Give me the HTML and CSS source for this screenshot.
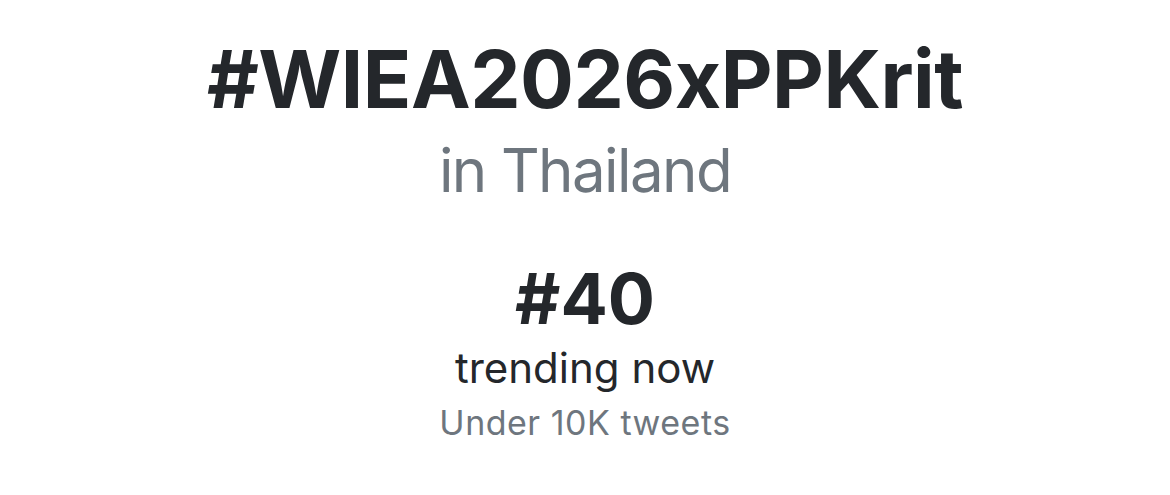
FILE: index.html
```html
<!DOCTYPE html>
<html>
<head>
<meta charset="utf-8">
<link rel="stylesheet" href="styles.css">
</head>
<body>
<main class="card">
  <h1 class="tag">#WIEA2026xPPKrit</h1>
  <div class="place">in Thailand</div>
  <div class="rank">#40</div>
  <div class="status">trending now</div>
  <div class="count">Under 10K tweets</div>
</main>
</body>
</html>
```
FILE: styles.css
```css
html, body {
  margin: 0;
  padding: 0;
  background: #ffffff;
}
body {
  width: 1170px;
  height: 495px;
  overflow: hidden;
  font-family: Inter, "Noto Sans", sans-serif;
}
.card {
  display: flex;
  flex-direction: column;
  align-items: center;
  padding-top: 31px;
}
.tag {
  margin: 0;
  font-size: 80px;
  font-weight: 700;
  line-height: 96px;
  color: #24272b;
  letter-spacing: -0.5px;
}
.place {
  margin-top: 7px;
  font-size: 60px;
  line-height: 72px;
  color: #6e767e;
  letter-spacing: -1.6px;
}
.rank {
  margin-top: 53px;
  font-size: 70px;
  font-weight: 700;
  line-height: 80px;
  color: #24272b;
}
.status {
  margin-top: 5px;
  font-size: 42px;
  line-height: 48px;
  color: #24272b;
}
.count {
  margin-top: 11px;
  font-size: 34px;
  line-height: 40px;
  color: #6e767e;
  letter-spacing: 0.5px;
}
```
